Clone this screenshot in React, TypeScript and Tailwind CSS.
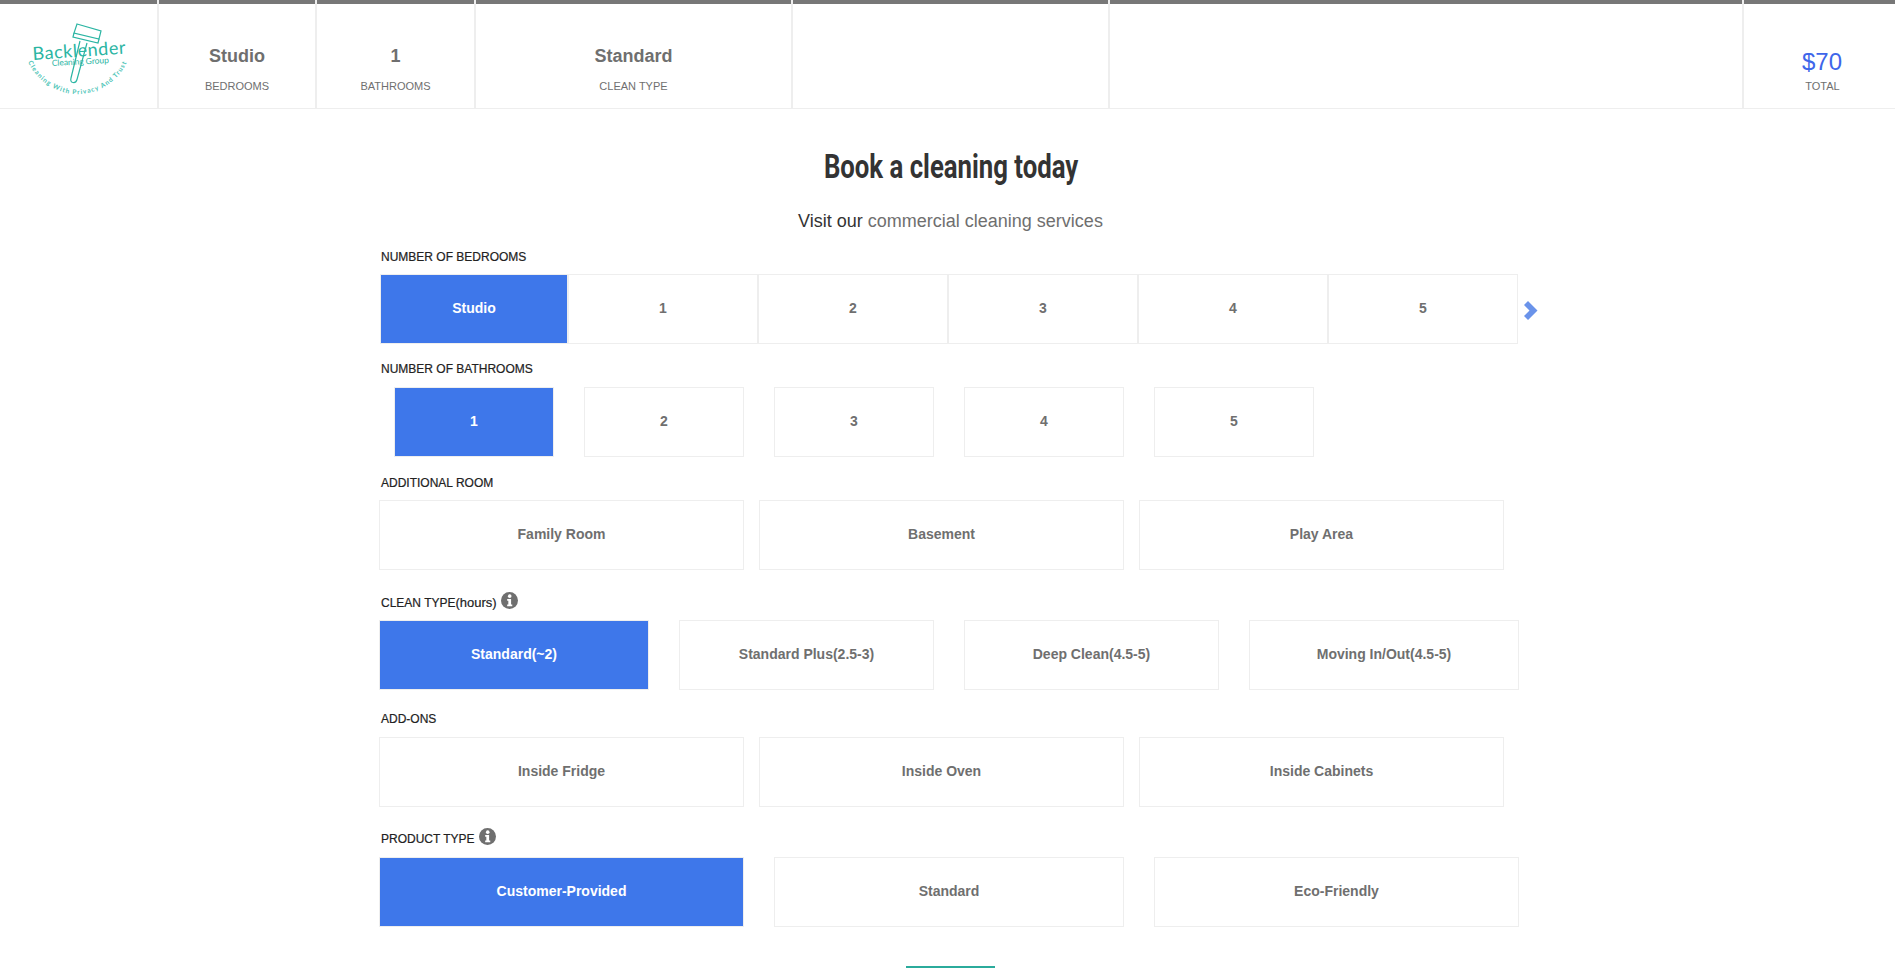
function InfoIcon() {
  return (
    <svg viewBox="0 0 16 16" className="w-[17px] h-[17px] shrink-0 -mt-[5px]">
      <circle cx="8" cy="8" r="8" fill="#6f6f6f" />
      <circle cx="8.2" cy="3.9" r="1.7" fill="#fff" />
      <path d="M5.8 6.6h3.7v5.2h1.1v1.7H5.8v-1.7h1.1V8.3H5.8z" fill="#fff" />
    </svg>
  );
}

function Logo() {
  return (
    <svg viewBox="0 0 104 76" className="w-[104px] h-[76px]">
      <g fill="none" stroke="#2bb5a3" strokeWidth="1.2">
        <path d="M50 4 74 11 72 19 47 13z" />
        <path d="M47 13 46 17 71 23 72 19" />
        <path d="M53 21 44 58q-1 4 2 4.5t4-3L60 23" />
      </g>
      <text x="6" y="40" fill="#2bb5a3" fontFamily="Lato, sans-serif" fontSize="18" textLength="93" transform="rotate(-4 6 40)">
        Backlender
      </text>
      <text x="25" y="46" fill="#2bb5a3" fontFamily="Lato, sans-serif" fontSize="8.5" textLength="57" transform="rotate(-3 25 46)">
        Cleaning Group
      </text>
      <path id="logoArc" d="M1 42C11 64 36 76 54 74C78 72 98 56 104 30" fill="none" />
      <text fill="#4cc4b6" fontFamily="Lato, sans-serif" fontSize="6.5" fontWeight="700" letterSpacing="1">
        <textPath href="#logoArc">Cleaning With Privacy And Trust</textPath>
      </text>
    </svg>
  );
}

function HeaderCell({ value, label, width }: { value?: string; label?: string; width: string }) {
  return (
    <div className={`${width} shrink-0 border-r-2 border-[#eeeeee] flex flex-col items-center`}>
      <div className="h-1 w-full bg-[#777777]" />
      <div className="mt-[40px] h-[24px] text-[18px] leading-[24px] font-bold text-[#6f6f6f]">{value}</div>
      <div className="mt-[11px] text-[11px] leading-[14px] text-[#6f6f6f]">{label}</div>
    </div>
  );
}

function Option({ text, active, className }: { text: string; active?: boolean; className: string }) {
  return (
    <div
      className={`${className} h-[70px] shrink-0 flex items-center justify-center pb-[1px] text-[14px] font-bold border border-[#eeeeee] ${
        active ? "bg-[#3e77ea] text-white" : "bg-white text-[#6f6f6f]"
      }`}
    >
      {text}
    </div>
  );
}

function Label({ children, className }: { children: React.ReactNode; className: string }) {
  return (
    <div className={`${className} ml-[2px] h-[14px] flex items-center gap-[4px] text-[12px] leading-[14px] text-[#222222] [-webkit-text-stroke:0.2px]`}>
      {children}
    </div>
  );
}

export default function App() {
  return (
    <div className="h-[968px] overflow-hidden bg-white font-['Liberation_Sans',Arial,sans-serif]">
      {/* --- Top summary bar --- */}
      <header className="h-[109px] flex border-b border-[#eeeeee]">
        <div className="w-[159px] shrink-0 border-r-2 border-[#eeeeee]">
          <div className="h-1 bg-[#777777]" />
          <div className="pl-[27px] pt-[16px]">
            <Logo />
          </div>
        </div>
        <HeaderCell value="Studio" label="BEDROOMS" width="w-[158px]" />
        <HeaderCell value="1" label="BATHROOMS" width="w-[159px]" />
        <HeaderCell value="Standard" label="CLEAN TYPE" width="w-[317px]" />
        <HeaderCell width="w-[317px]" />
        <HeaderCell width="w-[634px]" />
        <div className="flex-1 flex flex-col items-center">
          <div className="h-1 w-full bg-[#777777]" />
          <div className="mt-[44px] pl-[5px] text-[24px] leading-[28px] text-[#3e66ea]">$70</div>
          <div className="mt-[3px] pl-[6px] text-[11px] leading-[14px] text-[#6f6f6f]">TOTAL</div>
        </div>
      </header>

      <h1 className="mt-[36px] pl-[7px] text-center text-[33px] leading-[44px] font-bold text-[#333333] font-['Roboto',sans-serif]">
        <span className="inline-block [transform:scaleX(.78)]">Book a cleaning today</span>
      </h1>
      <p className="mt-[21px] pl-[6px] text-center text-[18px] leading-[22px] text-[#333333]">
        Visit our <span className="text-[#6f6f6f]">commercial cleaning services</span>
      </p>

      <main className="ml-[379px] w-[1170px]">
        <Label className="mt-[18px]">NUMBER OF BEDROOMS</Label>
        <div className="mt-[10px] ml-[1px] flex items-center">
          <Option text="Studio" active className="w-[188px]" />
          <Option text="1" className="w-[190px]" />
          <Option text="2" className="w-[190px]" />
          <Option text="3" className="w-[190px]" />
          <Option text="4" className="w-[190px]" />
          <Option text="5" className="w-[190px]" />
          <svg viewBox="0 0 14 19" className="w-[14px] h-[19px] ml-[6px] mt-[3px]">
            <path d="M4 0 13.5 9.5 4 19 0 15 5.5 9.5 0 4z" fill="#6a93ea" />
          </svg>
        </div>

        <Label className="mt-[18px]">NUMBER OF BATHROOMS</Label>
        <div className="mt-[11px] ml-[15px] flex gap-[30px]">
          <Option text="1" active className="w-[160px]" />
          <Option text="2" className="w-[160px]" />
          <Option text="3" className="w-[160px]" />
          <Option text="4" className="w-[160px]" />
          <Option text="5" className="w-[160px]" />
        </div>

        <Label className="mt-[19px]">ADDITIONAL ROOM</Label>
        <div className="mt-[10px] flex gap-[15px]">
          <Option text="Family Room" className="w-[365px]" />
          <Option text="Basement" className="w-[365px]" />
          <Option text="Play Area" className="w-[365px]" />
        </div>

        <Label className="mt-[26px]">
          <span>
            CLEAN TYPE<span className="text-[13px]">(hours)</span>
          </span>
          <InfoIcon />
        </Label>
        <div className="mt-[10px] flex gap-[30px]">
          <Option text="Standard(~2)" active className="w-[270px]" />
          <Option text="Standard Plus(2.5-3)" className="w-[255px]" />
          <Option text="Deep Clean(4.5-5)" className="w-[255px]" />
          <Option text="Moving In/Out(4.5-5)" className="w-[270px]" />
        </div>

        <Label className="mt-[22px]">ADD-ONS</Label>
        <div className="mt-[11px] flex gap-[15px]">
          <Option text="Inside Fridge" className="w-[365px]" />
          <Option text="Inside Oven" className="w-[365px]" />
          <Option text="Inside Cabinets" className="w-[365px]" />
        </div>

        <Label className="mt-[25px]">
          PRODUCT TYPE <InfoIcon />
        </Label>
        <div className="mt-[11px] flex gap-[30px]">
          <Option text="Customer-Provided" active className="w-[365px]" />
          <Option text="Standard" className="w-[350px]" />
          <Option text="Eco-Friendly" className="w-[365px]" />
        </div>

        <div className="mt-[39px] ml-[527px] w-[89px] h-[40px] bg-white border-t-2 border-[#2bab9c]" />
      </main>
    </div>
  );
}
